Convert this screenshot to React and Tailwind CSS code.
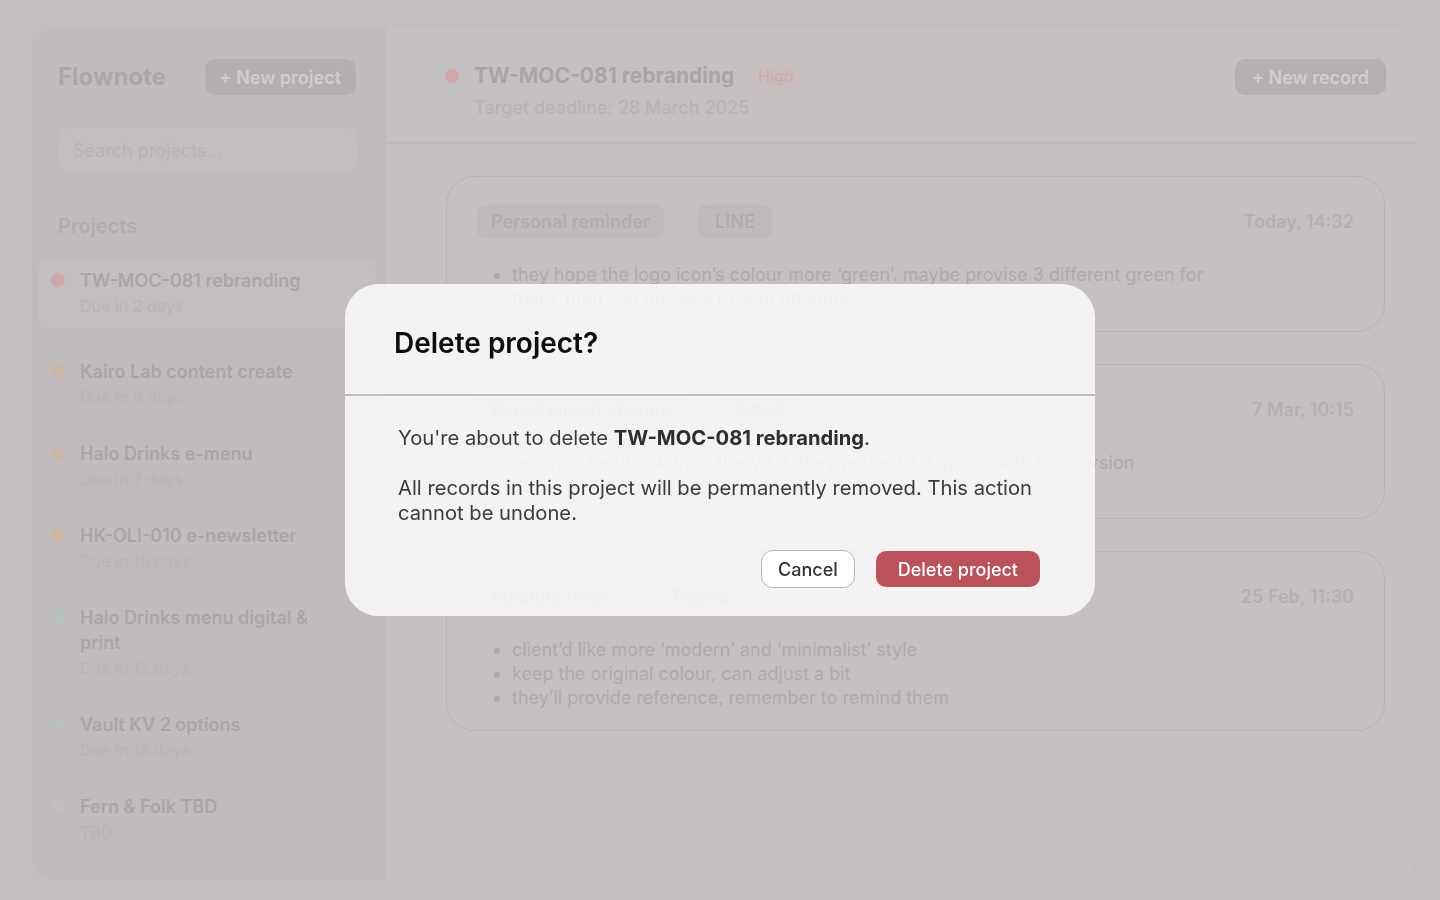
const projects = [
  { name: 'TW-MOC-081 rebranding', due: 'Due in 2 days', dot: 'bg-[#d0a8aa]', active: true },
  { name: 'Kairo Lab content create', due: 'Due in 5 days', dot: 'bg-[#cbb7a7]' },
  { name: 'Halo Drinks e-menu', due: 'Due in 7 days', dot: 'bg-[#cbb7a7]' },
  { name: 'HK-OLI-010 e-newsletter', due: 'Due in 10 days', dot: 'bg-[#cbb7a7]' },
  { name: 'Halo Drinks menu digital & print', due: 'Due in 12 days', dot: 'bg-[#b8c1ba]' },
  { name: 'Vault KV 2 options', due: 'Due in 18 days', dot: 'bg-[#b8c1ba]' },
  { name: 'Fern & Folk TBD', due: 'TBD', dot: 'bg-[#c3bfc0]' },
];

const records = [
  {
    type: 'Personal reminder',
    channel: 'LINE',
    time: 'Today, 14:32',
    notes: [
      'they hope the logo icon’s colour more ‘green’. maybe provise 3 different green for them. then can process to sign off stage.',
    ],
  },
  {
    type: 'Requirement change',
    channel: 'Email',
    time: '7 Mar, 10:15',
    notes: ['get their feedback from the V3.2, they prefer V1.3, go on with this version'],
  },
  {
    type: 'Meeting note',
    channel: 'Teams',
    time: '25 Feb, 11:30',
    notes: [
      'client’d like more ‘modern’ and ‘minimalist’ style',
      'keep the original colour, can adjust a bit',
      'they’ll provide reference, remember to remind them',
    ],
  },
];

const Sidebar = () => (
  <aside className="w-[354px] shrink-0 bg-[#c0bcbd] rounded-l-[24px] flex flex-col">
    <div className="pl-[26px] pr-[30px] pt-[31px] pb-[21px] border-b border-[#c5c1c2]">
      <div className="flex items-center justify-between">
        <span className="text-[24px] font-bold text-[#aba7a8]">Flownote</span>
        <button className="h-[36px] px-[15px] rounded-[10px] bg-[#b3afb0] text-[18px] font-semibold text-[#d1cdce]">
          + New project
        </button>
      </div>
      <div className="mt-[33px] h-[44px] w-[300px] rounded-[12px] bg-[#c3bfc0] flex items-center px-[15px] text-[18px] text-[#b8b4b5]">
        Search projects...
      </div>
    </div>
    <div className="pt-[18px] pl-[26px] text-[20px] leading-[28px] font-semibold text-[#b0acad]">Projects</div>
    <div className="mt-[18px] px-[6px] pr-[10px] flex flex-col gap-[11px]">
      {projects.map((p) => (
        <div
          key={p.name}
          className={`flex items-start gap-[15px] rounded-[12px] px-[13px] py-[10px] ${p.active ? 'bg-[#c3bfc0] mb-[9px]' : ''}`}
        >
          <span className={`mt-[5px] w-[14px] h-[14px] rounded-full shrink-0 ${p.dot}`} />
          <div className="pr-[10px]">
            <div className="text-[18px] leading-[25px] font-semibold text-[#a9a5a6]">{p.name}</div>
            <div className="text-[16px] leading-[26px] font-medium text-[#bab6b7]">{p.due}</div>
          </div>
        </div>
      ))}
    </div>
  </aside>
);

const RecordCard = ({ record }) => (
  <div className="min-h-[155px] rounded-[28px] border-[1.5px] border-[#b7b3b4] px-[30px] pt-[28px] pb-[20px]">
    <div className="flex items-center justify-between">
      <div className="flex items-center gap-[34px]">
        <span className="h-[33px] flex items-center px-[14px] rounded-[8px] bg-[#bfbbbc] text-[18px] font-semibold text-[#b0acad]">
          {record.type}
        </span>
        <span className="h-[33px] flex items-center px-[17px] rounded-[8px] bg-[#bfbbbc] text-[18px] font-semibold text-[#b0acad]">
          {record.channel}
        </span>
      </div>
      <span className="text-[18px] font-semibold text-[#b5b1b2]">{record.time}</span>
    </div>
    <ul className="mt-[25px] list-disc pl-[35px] pr-[150px] text-[18px] leading-[24px] text-[#aeaaab]">
      {record.notes.map((n) => (
        <li key={n}>{n}</li>
      ))}
    </ul>
  </div>
);

const Main = () => (
  <main className="flex-1 bg-[#c5c1c2] rounded-r-[24px] flex flex-col">
    <header className="h-[116px] pl-[59px] pr-[30px] pt-[31px] flex justify-between border-b-2 border-[#bdb9ba]">
      <div>
        <div className="h-[34px] flex items-center gap-[15px]">
          <span className="w-[14px] h-[14px] rounded-full bg-[#d0a8aa]" />
          <span className="text-[21px] font-bold text-[#a9a5a6]">TW-MOC-081 rebranding</span>
          <span className="h-[30px] flex items-center px-[9px] rounded-[8px] bg-[#c7bebf] text-[16px] font-medium text-[#d0abad]">High</span>
        </div>
        <div className="ml-[29px] mt-[2px] text-[18px] leading-[26px] font-medium text-[#b8b4b5]">Target deadline: 28 March 2025</div>
      </div>
      <button className="h-[36px] px-[17px] rounded-[10px] bg-[#b4b0b1] text-[18px] font-semibold text-[#d2cecf]">
        + New record
      </button>
    </header>
    <div className="pt-[32px] pl-[60px] pr-[31px] flex flex-col gap-[32px]">
      {records.map((r) => (
        <RecordCard key={r.time} record={r} />
      ))}
    </div>
  </main>
);

const DeleteModal = () => (
  <div className="fixed inset-0 flex items-center justify-center">
    <div className="w-[750px] rounded-[34px] bg-[#f4f2f3]/85 backdrop-brightness-125 overflow-hidden">
      <div className="h-[112px] pl-[49px] pt-[42px] border-b-2 border-[#bcbabb]">
        <h2 className="text-[28px] leading-[34px] font-semibold text-[#0d0d0d]">Delete project?</h2>
      </div>
      <div className="pl-[53px] pr-[55px] pt-[29px] pb-[28px]">
        <p className="text-[20.2px] leading-[25px] text-[#3b3b3b]">
          You're about to delete <span className="font-bold text-[#2e2e2e]">TW-MOC-081 rebranding</span>.
        </p>
        <p className="mt-[25px] text-[20.2px] leading-[25px] text-[#3b3b3b]">
          All records in this project will be permanently removed. This action cannot be undone.
        </p>
        <div className="mt-[25px] flex justify-end gap-[21px]">
          <button className="h-[38px] px-[16px] rounded-[12px] bg-white border-[1.5px] border-[#b8b6b7] text-[18px] font-medium text-[#333]">
            Cancel
          </button>
          <button className="h-[36px] mt-[1px] px-[22px] rounded-[10px] bg-[#bb5159] text-[18px] font-medium text-white">
            Delete project
          </button>
        </div>
      </div>
    </div>
  </div>
);

export default function App() {
  return (
    <div className="min-h-screen h-[900px] bg-[#c3bfc0] font-['Inter',sans-serif] px-[32px] pt-[28px] pb-[20px] pr-[24px]">
      <div className="h-[852px] flex rounded-[24px]">
        <Sidebar />
        <Main />
      </div>
      <DeleteModal />
    </div>
  );
}
